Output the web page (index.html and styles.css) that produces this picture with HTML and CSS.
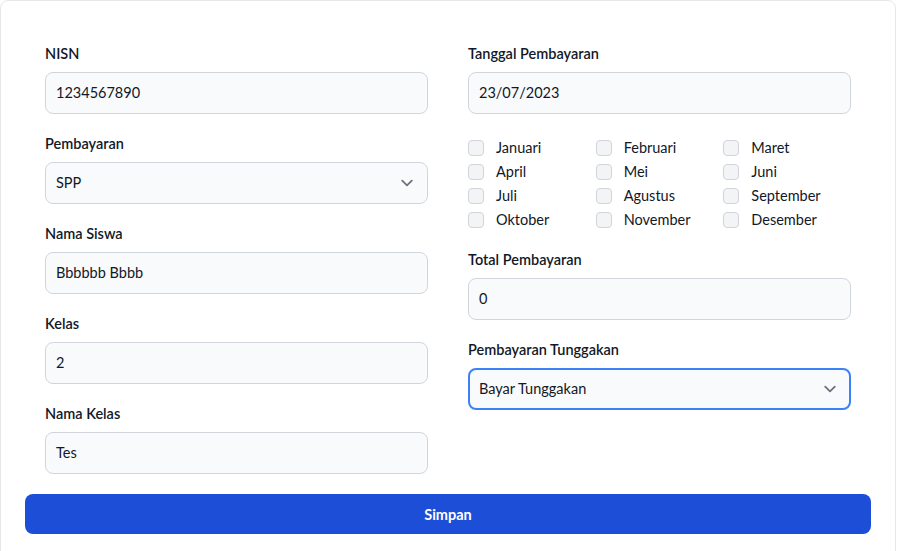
FILE: index.html
```html
<!DOCTYPE html>
<html lang="id">
<head>
<meta charset="utf-8">
<title>Pembayaran</title>
<link rel="stylesheet" href="styles.css">
</head>
<body>
<div class="card">
  <form class="form">
    <div class="grid">
      <div class="col">
        <div class="field">
          <label class="label">NISN</label>
          <div class="box">1234567890</div>
        </div>
        <div class="field">
          <label class="label">Pembayaran</label>
          <div class="box select"><span>SPP</span>
            <svg class="chev" width="24" height="24" viewBox="0 0 20 20"><path d="M6 8l4 4 4-4" fill="none" stroke="#6b7280" stroke-width="1.5" stroke-linecap="round" stroke-linejoin="round"/></svg>
          </div>
        </div>
        <div class="field">
          <label class="label">Nama Siswa</label>
          <div class="box">Bbbbbb Bbbb</div>
        </div>
        <div class="field">
          <label class="label">Kelas</label>
          <div class="box">2</div>
        </div>
        <div class="field">
          <label class="label">Nama Kelas</label>
          <div class="box">Tes</div>
        </div>
      </div>
      <div class="col">
        <div class="field">
          <label class="label">Tanggal Pembayaran</label>
          <div class="box">23/07/2023</div>
        </div>
        <div class="months">
          <label class="month"><span class="cb"></span>Januari</label>
          <label class="month"><span class="cb"></span>Februari</label>
          <label class="month"><span class="cb"></span>Maret</label>
          <label class="month"><span class="cb"></span>April</label>
          <label class="month"><span class="cb"></span>Mei</label>
          <label class="month"><span class="cb"></span>Juni</label>
          <label class="month"><span class="cb"></span>Juli</label>
          <label class="month"><span class="cb"></span>Agustus</label>
          <label class="month"><span class="cb"></span>September</label>
          <label class="month"><span class="cb"></span>Oktober</label>
          <label class="month"><span class="cb"></span>November</label>
          <label class="month"><span class="cb"></span>Desember</label>
        </div>
        <div class="field">
          <label class="label">Total Pembayaran</label>
          <div class="box">0</div>
        </div>
        <div class="field">
          <label class="label">Pembayaran Tunggakan</label>
          <div class="box select focus"><span>Bayar Tunggakan</span>
            <svg class="chev" width="24" height="24" viewBox="0 0 20 20"><path d="M6 8l4 4 4-4" fill="none" stroke="#6b7280" stroke-width="1.5" stroke-linecap="round" stroke-linejoin="round"/></svg>
          </div>
        </div>
      </div>
    </div>
    <button type="button" class="btn">Simpan</button>
  </form>
</div>
</body>
</html>
```
FILE: styles.css
```css
* { box-sizing: border-box; }
html, body { margin: 0; background: #ffffff; }
body {
  font-family: "Lato", "Noto Sans", sans-serif;
  color: #111827;
  font-size: 14.5px;
  line-height: 20px;
}
.card {
  width: 896px;
  min-height: 560px;
  background: #fff;
  border: 1px solid #e5e7eb;
  border-radius: 8px;
  padding: 24px;
}
.grid {
  display: grid;
  grid-template-columns: 1fr 1fr;
  column-gap: 40px;
  padding: 19px 20px 20px;
}
.col {
  display: flex;
  flex-direction: column;
  gap: 20px;
}
.field { display: flex; flex-direction: column; }
.label {
  font-weight: 600;
  font-size: 14.5px;
  line-height: 20px;
  margin-bottom: 8px;
}
.box {
  height: 42px;
  background: #f9fafb;
  border: 1px solid #d1d5db;
  border-radius: 8px;
  padding: 0 10px;
  display: flex;
  align-items: center;
  font-size: 14.5px;
}
.select { justify-content: space-between; padding-right: 8px; }
.focus { border: 2px solid #3b82f6; padding-left: 9px; padding-right: 7px; }
.chev { display: block; }
.months {
  display: grid;
  grid-template-columns: repeat(3, 1fr);
  row-gap: 4px;
  padding-top: 4px;
}
.month {
  display: flex;
  align-items: center;
  gap: 12px;
  font-size: 14.5px;
  line-height: 20px;
}
.cb {
  width: 16px;
  height: 16px;
  background: #f3f4f6;
  border: 1px solid #d1d5db;
  border-radius: 4px;
  flex: none;
}
.btn {
  display: block;
  width: 100%;
  height: 40px;
  background: #1d4ed8;
  color: #fff;
  border: 0;
  border-radius: 8px;
  font-family: inherit;
  font-size: 14.5px;
  font-weight: 700;
}
```
